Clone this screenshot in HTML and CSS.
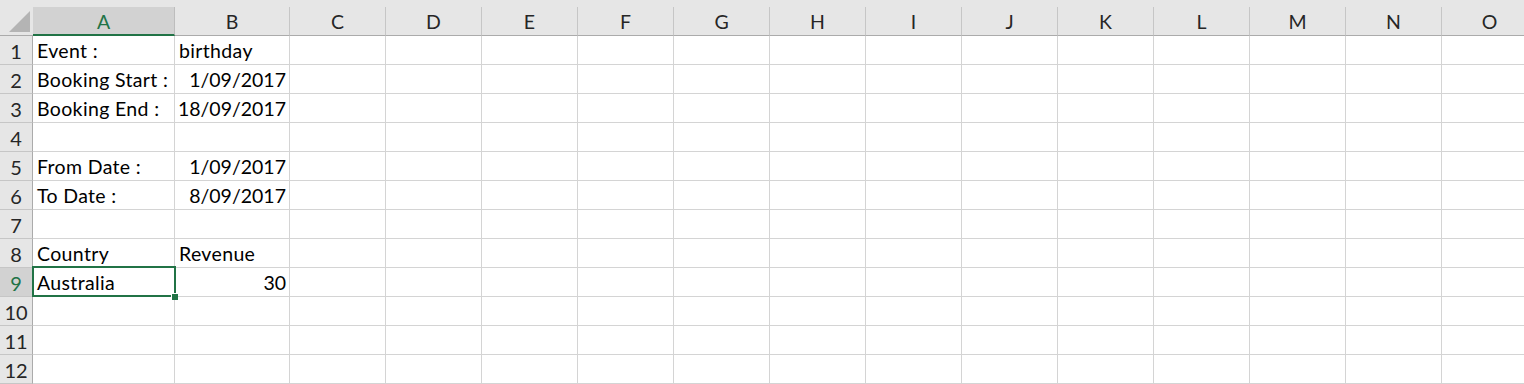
FILE: index.html
```html
<!DOCTYPE html>
<html lang="en">
<head>
    <meta charset="UTF-8">
    <title>Sheet1</title>
    <link rel="stylesheet" href="styles.css">
</head>
<body>
    <div class="sheet"></div>

    <script>
// 单元格数据: 行号 -> [A列, B列, B列是否右对齐]
var data = {
    1: ["Event :", "birthday", false],
    2: ["Booking Start :", "1/09/2017", true],
    3: ["Booking End :", "18/09/2017", true],
    5: ["From Date :", "1/09/2017", true],
    6: ["To Date :", "8/09/2017", true],
    8: ["Country", "Revenue", false],
    9: ["Australia", "30", true]
};
var cols = "ABCDEFGHIJKLMNO".split("");
var sheet = document.getElementsByClassName("sheet")[0];
var html = "<div class='corner'><span class='tri'></span></div>";

// 列标题
for (var i = 0; i < cols.length; i++) {
    html += "<div class='col-head" + (i == 0 ? " active" : "") + "'>" + cols[i] + "</div>";
}

// 12 行
for (var r = 1; r <= 12; r++) {
    html += "<div class='row-head" + (r == 9 ? " active" : "") + "'>" + r + "</div>";
    var row = data[r] || ["", "", false];
    for (var c = 0; c < cols.length; c++) {
        var text = "", cls = "cell";
        if (c == 0) { text = row[0]; }
        if (c == 1) { text = row[1]; if (row[2]) { cls += " num"; } }
        if (r == 9 && c == 0) { cls += " selected"; }
        html += "<div class='" + cls + "'>" + text + "</div>";
    }
}
sheet.innerHTML = html;
    </script>
</body>
</html>
```

FILE: styles.css
```css
html, body{
    margin: 0;
    padding: 0;
    background: #fff;
    overflow: hidden;
}
body{
    font-family: "Lato", "Liberation Sans", sans-serif;
    font-size: 19.5px;
    line-height: 1;
    color: #000;
}
.sheet{
    display: grid;
    grid-template-columns: 33px 142px 115px repeat(13, 96px);
    grid-template-rows: 36px repeat(12, 29px);
    width: 1538px;
    background: #e6e6e6;
}
.corner{
    position: relative;
    background: #e6e6e6;
    border-bottom: 1px solid #ababab;
}
.corner .tri{
    position: absolute;
    right: 3px;
    bottom: 3px;
    width: 0;
    height: 0;
    border-left: 21px solid transparent;
    border-bottom: 21px solid #b4b4b4;
}
.col-head{
    margin-top: 7px;
    display: flex;
    align-items: center;
    justify-content: center;
    background: #e6e6e6;
    border-right: 1px solid #c6c6c6;
    border-bottom: 1px solid #ababab;
    color: #262626;
    padding-top: 2px;
}
.col-head.active{
    background: #d2d2d2;
    color: #217346;
    border-bottom: 2px solid #217346;
    border-right-color: #bdbdbd;
}
.row-head{
    display: flex;
    align-items: center;
    justify-content: center;
    background: #e6e6e6;
    border-right: 1px solid #ababab;
    border-bottom: 1px solid #c6c6c6;
    color: #262626;
    font-size: 20px;
    padding-top: 2px;
}
.row-head.active{
    background: #d2d2d2;
    color: #217346;
}
.cell{
    position: relative;
    display: flex;
    align-items: center;
    padding: 2px 3px 0 4px;
    background: #fff;
    border-right: 1px solid #d4d4d4;
    border-bottom: 1px solid #d4d4d4;
    white-space: nowrap;
    letter-spacing: 0.35px;
    overflow: visible;
}
.cell.num{
    justify-content: flex-end;
    letter-spacing: 0;
}
.cell.selected{
    z-index: 1;
}
.cell.selected::before{
    content: "";
    position: absolute;
    left: -1px;
    top: -2px;
    right: -2px;
    bottom: -1px;
    border: 2px solid #217346;
}
.cell.selected::after{
    content: "";
    position: absolute;
    right: -4px;
    bottom: -4px;
    width: 6px;
    height: 6px;
    background: #217346;
    border: 1px solid #fff;
    border-right: none;
    border-bottom: none;
}
```
